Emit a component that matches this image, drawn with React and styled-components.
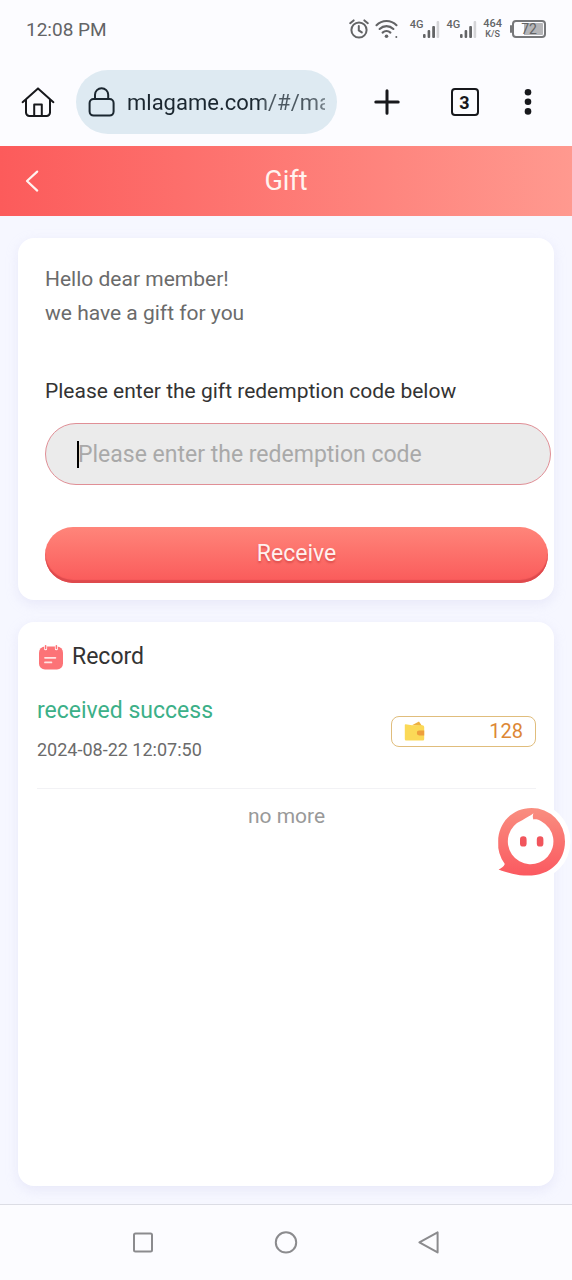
import React, { useState } from "react";
import styled, { createGlobalStyle } from "styled-components";

const GlobalStyle = createGlobalStyle`
  * {
    box-sizing: border-box;
  }

  body {
    margin: 0;
    background: #f6f7ff;
    font-family: Roboto, "Liberation Sans", sans-serif;
  }

  button,
  input {
    font-family: inherit;
  }
`;

const Main = styled.div`
  display: flex;
  flex-direction: column;
  width: 100%;
  min-height: 100vh;
`;

const StatusBar = styled.div`
  display: flex;
  align-items: center;
  justify-content: space-between;
  height: 58px;
  padding: 0 26px;
  background: #fcfcff;
  color: #636466;
  font-size: 19px;
`;

const StatusIcons = styled.div`
  display: flex;
  align-items: center;
  gap: 6px;
`;

const Signal = styled.div`
  display: flex;
  align-items: flex-start;
  height: 20px;
  margin-left: 6px;
  font-size: 11px;
  font-weight: 500;
  line-height: 12px;

  & + & {
    margin-left: 0;
  }
`;

const Speed = styled.div`
  display: flex;
  flex-direction: column;
  align-items: center;
  font-size: 11px;
  font-weight: 500;
  line-height: 10px;

  small {
    font-size: 9px;
  }
`;

const Battery = styled.div`
  display: flex;
  align-items: center;
  margin-left: 2px;

  &::before {
    content: "";
    width: 2px;
    height: 8px;
    background: #76777a;
    border-radius: 1px;
  }
`;

const BatteryLevel = styled.div`
  width: 34px;
  height: 18px;
  border: 2px solid #76777a;
  border-radius: 4px;
  background: linear-gradient(90deg, transparent 9px, #b5b5b8 9px) content-box;
  padding: 1px;
  font-size: 14px;
  line-height: 12px;
  text-align: center;
`;

const BrowserBar = styled.div`
  display: flex;
  align-items: center;
  height: 88px;
  padding: 0 36px 0 16px;
  background: #fcfcff;
`;

const IconButton = styled.button`
  display: flex;
  align-items: center;
  justify-content: center;
  width: ${(props) => props.$width || "44px"};
  height: 44px;
  padding: 0;
  border: none;
  background: none;
  color: ${(props) => props.$color || "#17181c"};
`;

const BrowserActions = styled.div`
  display: flex;
  flex: 1;
  align-items: center;
  justify-content: space-between;
  padding-left: 28px;
`;

const AddressBar = styled.label`
  display: flex;
  align-items: center;
  gap: 11px;
  width: 261px;
  height: 64px;
  margin-left: 16px;
  padding: 0 12px;
  border-radius: 32px;
  background: #deeaf2;

  svg {
    flex-shrink: 0;
  }
`;

const AddressInput = styled.input`
  flex: 1;
  min-width: 0;
  padding: 0;
  border: none;
  outline: none;
  background: none;
  color: #1b2730;
  font-size: 22px;
  mask-image: linear-gradient(
    90deg,
    #000 137px,
    rgba(0, 0, 0, 0.75) 137px,
    rgba(0, 0, 0, 0.75) 184px,
    rgba(0, 0, 0, 0.5)
  );
`;

const TabCount = styled.span`
  display: flex;
  align-items: center;
  justify-content: center;
  width: 28px;
  height: 28px;
  border: 2px solid #17181c;
  border-radius: 4px;
  font-size: 18px;
  font-weight: 700;
`;

const Header = styled.header`
  display: grid;
  grid-template-columns: 64px 1fr 64px;
  align-items: center;
  justify-items: center;
  height: 70px;
  background: linear-gradient(90deg, #fc5b5b, #ff998f);
  color: #fff3ef;
`;

const Title = styled.h1`
  margin: 0;
  font-size: 27px;
  font-weight: 400;
`;

const Content = styled.main`
  display: flex;
  flex: 1;
  flex-direction: column;
  gap: 22px;
  padding: 22px 18px 18px;
`;

const Card = styled.section`
  border-radius: 16px;
  background: #fff;
  box-shadow: 0 4px 12px rgba(208, 208, 237, 0.36);
`;

const GiftCard = styled(Card)`
  padding: 24px 3px 17px 27px;
`;

const Greeting = styled.p`
  margin: 0 0 44px;
  color: #6b6b6b;
  font-size: 21px;
  line-height: 34px;
`;

const CodeLabel = styled.label`
  display: block;
  margin-bottom: 15px;
  color: #333;
  font-size: 21px;
  line-height: 34px;
`;

const CodeField = styled.div`
  position: relative;
  margin-bottom: 42px;
`;

const CodeInput = styled.input`
  display: block;
  width: 100%;
  height: 62px;
  padding: 0 32px;
  border: 1px solid #e08f96;
  border-radius: 32px;
  outline: none;
  background: #ebebeb;
  color: #333;
  font-size: 23px;

  &::placeholder {
    color: #a9a9a9;
  }
`;

const Caret = styled.span`
  position: absolute;
  top: 18px;
  left: 32px;
  width: 2px;
  height: 27px;
  background: #000;
`;

const ReceiveButton = styled.button`
  display: block;
  width: calc(100% - 3px);
  height: 56px;
  padding: 0 0 3px;
  border: none;
  border-radius: 28px;
  background: linear-gradient(#ff857a, #fa5a5a);
  box-shadow: inset 0 -3px 1px #de4a4d;
  color: #fff1ee;
  font-size: 23px;
  text-shadow: 0 2px 2px rgba(190, 50, 50, 0.5);
`;

const RecordCard = styled(Card)`
  flex: 1;
  padding: 18px 18px 18px 19px;
`;

const RecordTitle = styled.h2`
  display: flex;
  align-items: center;
  gap: 9px;
  margin: 0 0 18px;
  padding-left: 2px;
  color: #333;
  font-size: 23px;
  font-weight: 400;
  line-height: 34px;
`;

const RecordItem = styled.div`
  display: flex;
  align-items: center;
  justify-content: space-between;
  padding-bottom: 18px;
  border-bottom: 1px solid #f2f2f5;
`;

const RecordStatus = styled.div`
  color: #3cb088;
  font-size: 23px;
  line-height: 38px;
`;

const RecordTime = styled.div`
  color: #6b6b6b;
  font-size: 18px;
  line-height: 40px;
`;

const Amount = styled.div`
  display: flex;
  align-items: center;
  justify-content: space-between;
  width: 145px;
  height: 31px;
  padding: 0 12px;
  border: 1px solid #e0bd7c;
  border-radius: 8px;
  color: #dd8735;
  font-size: 20px;
`;

const NoMore = styled.p`
  margin: 10px 0 0;
  color: #999;
  font-size: 21px;
  line-height: 34px;
  text-align: center;
`;

const ServiceButton = styled.button`
  position: fixed;
  top: 802px;
  right: 0;
  padding: 0;
  border: none;
  background: none;

  svg {
    display: block;
  }
`;

const NavBar = styled.nav`
  display: flex;
  align-items: center;
  justify-content: center;
  height: 76px;
  border-top: 1px solid #dcdde5;
  background: #fcfcff;
`;

const AlarmIcon = () => (
  <svg width="20" height="20" viewBox="0 0 20 20" fill="none" stroke="currentColor" strokeWidth="2" strokeLinecap="round">
    <circle cx="10" cy="11" r="7.6" />
    <path d="M9.8 7v4.4l3 2M1.2 4.2l3.4-2.8M18.8 4.2l-3.4-2.8" />
  </svg>
);

const WifiIcon = () => (
  <svg width="23" height="20" viewBox="0 0 23 20" fill="none" stroke="currentColor" strokeWidth="2.1" strokeLinecap="round">
    <path d="M1.5 6.2c5.5-5.6 14.5-5.6 20 0M4.6 10c3.9-3.8 9.9-3.8 13.8 0M7.6 13.6c2.2-2 5.6-2 7.8 0" />
    <circle cx="11.5" cy="17.2" r="1.8" fill="currentColor" stroke="none" />
    <circle cx="21.3" cy="18" r="1" fill="currentColor" stroke="none" />
  </svg>
);

const SignalIcon = () => (
  <svg width="17" height="20" viewBox="0 0 17 20" fill="currentColor">
    <rect x="0" y="15" width="2.6" height="4" rx="1" />
    <rect x="4.6" y="11" width="2.6" height="8" rx="1" />
    <rect x="9.2" y="7" width="2.8" height="12" rx="1" />
    <rect x="13.6" y="2" width="2.6" height="17" rx="1" fill="#d4d4d7" />
  </svg>
);

const HomeIcon = () => (
  <svg width="34" height="32" viewBox="0 0 34 32" fill="none" stroke="currentColor" strokeWidth="2" strokeLinecap="round" strokeLinejoin="round">
    <path d="M1.6 16.2 17 2.4l15.4 13.8M5 13.4v13.2a3.4 3.4 0 0 0 3.4 3.4h17.2a3.4 3.4 0 0 0 3.4-3.4V13.4" />
    <path d="M13.2 29.6V18.4h7.6v11.2" />
  </svg>
);

const LockIcon = () => (
  <svg width="28" height="32" viewBox="0 0 28 32" fill="none" stroke="#1b2730" strokeWidth="2">
    <rect x="1.6" y="13" width="24" height="16.6" rx="4" />
    <path d="M7 13V8.8a6.6 6.6 0 0 1 13.2 0V13" />
  </svg>
);

const PlusIcon = () => (
  <svg width="28" height="28" viewBox="0 0 28 28" stroke="currentColor" strokeWidth="3" strokeLinecap="round">
    <path d="M14 2.8v22.4M2.8 14h22.4" />
  </svg>
);

const MoreIcon = () => (
  <svg width="8" height="28" viewBox="0 0 8 28" fill="currentColor">
    <circle cx="4" cy="4.2" r="3.3" />
    <circle cx="4" cy="13.8" r="3.3" />
    <circle cx="4" cy="23.4" r="3.3" />
  </svg>
);

const BackIcon = () => (
  <svg width="14" height="24" viewBox="0 0 14 24" fill="none" stroke="currentColor" strokeWidth="2.2" strokeLinecap="round" strokeLinejoin="round">
    <path d="M12.2 2.6 2 12l10.2 9.6" />
  </svg>
);

const RecordIcon = () => (
  <svg width="24" height="25" viewBox="0 0 24 25">
    <rect x="0" y="1.6" width="24" height="23" rx="6" fill="#fc7377" />
    <path d="M6.6 0.8v3M17.4 0.8v3" stroke="#fff" strokeWidth="3" strokeLinecap="round" />
    <path d="M6.6 0.8v2.6M17.4 0.8v2.6" stroke="#fc7377" strokeWidth="1.6" strokeLinecap="round" />
    <path d="M6 12.8h10.4M6 17.4h6.4" stroke="#ffe3e2" strokeWidth="1.8" strokeLinecap="round" />
  </svg>
);

const WalletIcon = () => (
  <svg width="22" height="20" viewBox="0 0 22 20">
    <path d="M8 4.2 15 0.4l3 4.6z" fill="#eeb23f" />
    <path d="M1.6 3.2 8 4.2h10.4a1.8 1.8 0 0 1 1.8 1.8v12.2a1.2 1.2 0 0 1-1.2 1.2H2a1.2 1.2 0 0 1-1.2-1.2V4a.8.8 0 0 1 .8-.8z" fill="#fbd957" />
    <path d="M20.2 9.6h-5a2.4 2.4 0 0 0 0 4.8h5z" fill="#ee9f3c" />
  </svg>
);

const ServiceIcon = () => (
  <svg width="75" height="78" viewBox="0 0 75 78">
    <defs>
      <linearGradient id="service" x1="0" y1="0" x2="0" y2="1">
        <stop offset="0" stopColor="#f98e80" />
        <stop offset="1" stopColor="#fb5960" />
      </linearGradient>
    </defs>
    <circle cx="34.5" cy="39.5" r="39" fill="#fff" />
    <path
      d="M34.5 6A33.3 33.3 0 0 1 68 39.4C68 58.6 53.4 73.6 30.6 73.6 20.6 73.6 9.6 70.4 1.6 67.4 4.4 66.4 6.6 64.8 7.8 62A33.4 33.4 0 0 1 1.2 39.6C1.2 20.8 15.6 6 34.5 6z"
      fill="url(#service)"
    />
    <path
      d="M36.4 11.2C33.8 13.6 29.6 15.2 25.2 18.2A22.8 22.8 0 1 0 44.6 19.4C42.2 17.8 39.6 17.2 36.4 17.4 35.6 15.6 35.6 13.4 36.4 11.2z"
      fill="#fff"
    />
    <rect x="23" y="34.2" width="6.6" height="10.4" rx="3.2" fill="#f1555c" />
    <rect x="39.8" y="34.2" width="6.6" height="10.4" rx="3.2" fill="#f1555c" />
  </svg>
);

const RecentIcon = () => (
  <svg width="24" height="24" viewBox="0 0 24 24" fill="none" stroke="currentColor" strokeWidth="2">
    <rect x="3" y="2.6" width="18" height="18" rx="1.5" />
  </svg>
);

const CircleIcon = () => (
  <svg width="24" height="24" viewBox="0 0 24 24" fill="none" stroke="currentColor" strokeWidth="2">
    <circle cx="12" cy="11.4" r="10.2" />
  </svg>
);

const TriangleIcon = () => (
  <svg width="24" height="24" viewBox="0 0 24 24" fill="none" stroke="currentColor" strokeWidth="2" strokeLinejoin="round">
    <path d="M20.6 1.4v20L2.4 11.4z" />
  </svg>
);

const records = [
  { id: 1, status: "received success", time: "2024-08-22 12:07:50", amount: 128 },
];

const App = () => {
  const [url, setUrl] = useState("mlagame.com/#/ma");
  const [code, setCode] = useState("");

  return (
    <Main>
      <GlobalStyle />
      <StatusBar>
        <span>12:08 PM</span>
        <StatusIcons>
          <AlarmIcon />
          <WifiIcon />
          <Signal>
            4G
            <SignalIcon />
          </Signal>
          <Signal>
            4G
            <SignalIcon />
          </Signal>
          <Speed>
            464
            <small>K/S</small>
          </Speed>
          <Battery>
            <BatteryLevel>72</BatteryLevel>
          </Battery>
        </StatusIcons>
      </StatusBar>

      <BrowserBar>
        <IconButton aria-label="Home">
          <HomeIcon />
        </IconButton>
        <AddressBar>
          <LockIcon />
          <AddressInput
            type="text"
            aria-label="Address"
            value={url}
            onChange={(e) => setUrl(e.target.value)}
          />
        </AddressBar>
        <BrowserActions>
          <IconButton aria-label="New tab">
            <PlusIcon />
          </IconButton>
          <IconButton aria-label="Tabs">
            <TabCount>3</TabCount>
          </IconButton>
          <IconButton aria-label="More" $width="16px">
            <MoreIcon />
          </IconButton>
        </BrowserActions>
      </BrowserBar>

      <Header>
        <IconButton aria-label="Back" $color="#fff3ef">
          <BackIcon />
        </IconButton>
        <Title>Gift</Title>
      </Header>

      <Content>
        <GiftCard>
          <Greeting>
            Hello dear member!
            <br />
            we have a gift for you
          </Greeting>
          <CodeLabel htmlFor="code">
            Please enter the gift redemption code below
          </CodeLabel>
          <CodeField>
            <CodeInput
              id="code"
              type="text"
              placeholder="Please enter the redemption code"
              value={code}
              onChange={(e) => setCode(e.target.value)}
            />
            {code === "" && <Caret />}
          </CodeField>
          <ReceiveButton>Receive</ReceiveButton>
        </GiftCard>

        <RecordCard>
          <RecordTitle>
            <RecordIcon />
            Record
          </RecordTitle>
          {records.map((record) => (
            <RecordItem key={record.id}>
              <div>
                <RecordStatus>{record.status}</RecordStatus>
                <RecordTime>{record.time}</RecordTime>
              </div>
              <Amount>
                <WalletIcon />
                {record.amount}
              </Amount>
            </RecordItem>
          ))}
          <NoMore>no more</NoMore>
        </RecordCard>
      </Content>

      <ServiceButton aria-label="Customer service">
        <ServiceIcon />
      </ServiceButton>

      <NavBar>
        <IconButton aria-label="Recent apps" $width="25%" $color="#8b8b8e">
          <RecentIcon />
        </IconButton>
        <IconButton aria-label="Home screen" $width="25%" $color="#8b8b8e">
          <CircleIcon />
        </IconButton>
        <IconButton aria-label="Go back" $width="25%" $color="#8b8b8e">
          <TriangleIcon />
        </IconButton>
      </NavBar>
    </Main>
  );
};

export default App;
